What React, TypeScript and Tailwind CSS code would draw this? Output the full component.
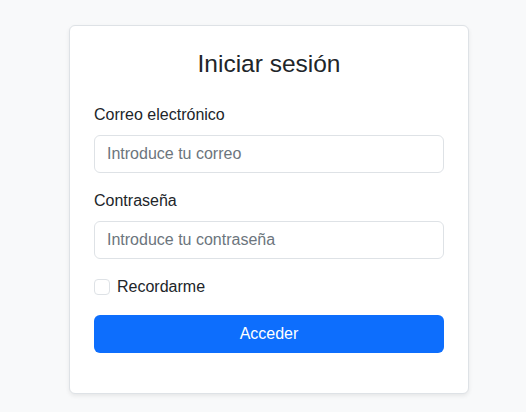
import React from "react";

export default function App() {
  return (
    <div
      className="min-h-[412px] w-full bg-[#f8f9fa] pl-[69px] pt-[25px] text-[#212529]"
      style={{ fontFamily: '"Liberation Sans", Arial, sans-serif' }}
    >
      <div className="w-[400px] rounded-[6px] border border-[#dee2e6] bg-white shadow-[0_2px_4px_rgba(0,0,0,0.075)]">
        <div className="p-6">
          <h3 className="mb-6 text-center text-[24.5px] leading-[28.8px] font-normal">
            Iniciar sesión
          </h3>
          <form onSubmit={(e) => e.preventDefault()}>
            <div className="mb-4">
              <label className="mb-2 block text-[16px] leading-6">Correo electrónico</label>
              <input
                type="email"
                placeholder="Introduce tu correo"
                className="block h-[38px] w-full rounded-[6px] border border-[#dee2e6] bg-white px-3 text-[16px] leading-6 text-[#212529] placeholder:text-[#6c757d] outline-none"
              />
            </div>
            <div className="mb-4">
              <label className="mb-2 block text-[16px] leading-6">Contraseña</label>
              <input
                type="password"
                placeholder="Introduce tu contraseña"
                className="block h-[38px] w-full rounded-[6px] border border-[#dee2e6] bg-white px-3 text-[16px] leading-6 text-[#212529] placeholder:text-[#6c757d] outline-none"
              />
            </div>
            <div className="mb-4 flex h-6 items-center">
              <span className="h-4 w-4 rounded-[4px] border border-[#dee2e6] bg-white" />
              <label className="ml-[7px] text-[16px] leading-6">Recordarme</label>
            </div>
            <button
              type="submit"
              className="mb-4 block h-[38px] w-full rounded-[6px] bg-[#0d6efd] text-[16px] leading-6 text-white"
            >
              Acceder
            </button>
          </form>
        </div>
      </div>
    </div>
  );
}
